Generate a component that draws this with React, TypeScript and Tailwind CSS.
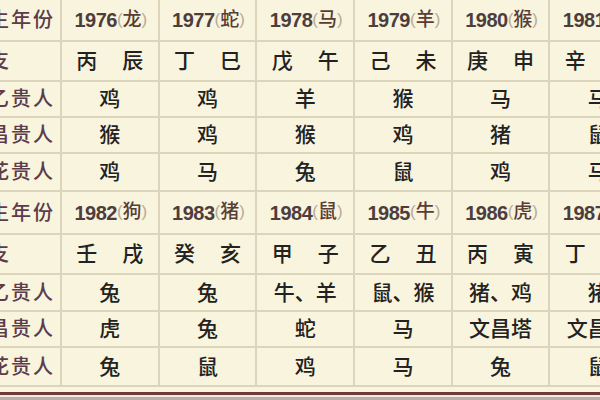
import React from 'react'

type Table = {
  years: [string, string][]
  stems: [string, string][]
  rows: string[][]
  heights: string
}

const labels = ['出生年份', '干支', '天乙贵人', '文昌贵人', '桃花贵人']

const tables: Table[] = [
  {
    years: [['1976', '龙'], ['1977', '蛇'], ['1978', '马'], ['1979', '羊'], ['1980', '猴'], ['1981', '鸡']],
    stems: [['丙', '辰'], ['丁', '巳'], ['戊', '午'], ['己', '未'], ['庚', '申'], ['辛', '酉']],
    rows: [
      ['鸡', '鸡', '羊', '猴', '马', '马'],
      ['猴', '鸡', '猴', '鸡', '猪', '鼠'],
      ['鸡', '马', '兔', '鼠', '鸡', '马'],
    ],
    heights: 'grid-rows-[40px_38px_34px_34px_36px]',
  },
  {
    years: [['1982', '狗'], ['1983', '猪'], ['1984', '鼠'], ['1985', '牛'], ['1986', '虎'], ['1987', '兔']],
    stems: [['壬', '戌'], ['癸', '亥'], ['甲', '子'], ['乙', '丑'], ['丙', '寅'], ['丁', '卯']],
    rows: [
      ['兔', '兔', '牛、羊', '鼠、猴', '猪、鸡', '猪'],
      ['虎', '兔', '蛇', '马', '文昌塔', '文昌塔'],
      ['兔', '鼠', '鸡', '马', '兔', '鼠'],
    ],
    heights: 'grid-rows-[41px_38px_35px_34px_37px]',
  },
]

function Label({ text }: { text: string }) {
  return (
    <div className="bg-[#f8f4de] overflow-hidden flex items-center">
      <span className="ml-[-33px] whitespace-nowrap text-[20px] tracking-[2px] font-medium text-[#5c3b4a]">
        {text}
      </span>
    </div>
  )
}

function YearTable({ t }: { t: Table }) {
  return (
    <div
      className={`grid grid-cols-[60px_repeat(6,95.7px)] gap-[2px] bg-[#ddd5bb] border-b-2 border-[#ddd5bb] ${t.heights}`}
    >
      <Label text={labels[0]} />
      {t.years.map(([y, a]) => (
        <div key={y} className="bg-[#f8f4de] flex items-center justify-center pl-[2px]">
          <span className="text-[20px] font-bold text-[#4d3d3d] tracking-[-0.5px]">{y}</span>
          <span className="text-[17px] text-[#b8aa98] -mt-[1px]">(</span>
          <span className="text-[19px] font-medium text-[#5a3e34]">{a}</span>
          <span className="text-[17px] text-[#b8aa98] -mt-[1px]">)</span>
        </div>
      ))}

      <Label text={labels[1]} />
      {t.stems.map(([a, b], i) => (
        <div key={i} className="bg-[#f8f4de] flex items-center justify-center gap-[25px] text-[21px] font-medium text-[#222]">
          <span>{a}</span>
          <span>{b}</span>
        </div>
      ))}

      {t.rows.map((row, r) => (
        <React.Fragment key={r}>
          <Label text={labels[r + 2]} />
          {row.map((v, i) => (
            <div key={i} className="bg-[#f8f4de] flex items-center justify-center text-[21px] font-medium text-[#222]">
              {v}
            </div>
          ))}
        </React.Fragment>
      ))}
    </div>
  )
}

export default function App() {
  return (
    <div
      className="w-[600px] h-[400px] overflow-hidden bg-[#f8f4de] flex flex-col"
      style={{ fontFamily: '"Liberation Sans", "Noto Sans CJK SC", sans-serif' }}
    >
      <YearTable t={tables[0]} />
      <YearTable t={tables[1]} />
      <div className="h-[5px]" />
      <div className="h-[3px] bg-[#6e3b3b]" />
      <div className="h-[2px] bg-[#f4e8e4]" />
      <div className="flex-1 bg-[#b8b0a8]" />
    </div>
  )
}
